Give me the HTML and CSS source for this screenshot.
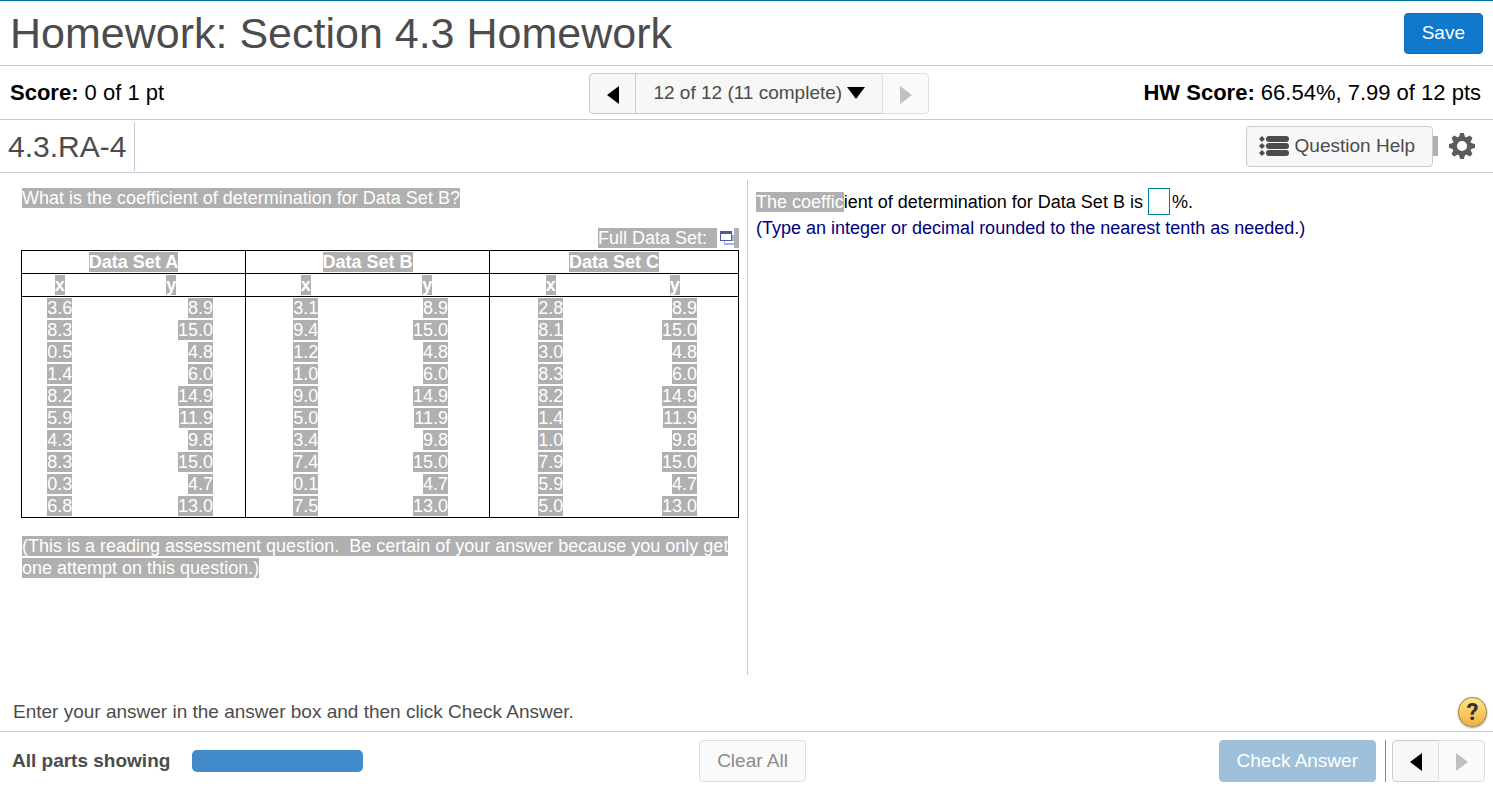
FILE: index.html
```html
<!DOCTYPE html>
<html lang="en">
<head>
    <meta charset="UTF-8">
    <meta name="viewport" content="width=device-width, initial-scale=1.0">
    <title>Homework: Section 4.3 Homework</title>
    <link rel="stylesheet" href="styles.css">
</head>
<body>
    <header class="title-bar">
        <h1>Homework: Section 4.3 Homework</h1>
        <button class="btn btn-save">Save</button>
    </header>

    <div class="score-bar">
        <div class="score"><strong>Score:</strong> 0 of 1 pt</div>
        <div class="btn-group">
            <button class="btn btn-arrow" aria-label="Previous question">
                <svg width="12" height="18" viewBox="0 0 12 18"><path d="M12 0v18L0 9z"></path></svg>
            </button>
            <button class="btn btn-jump">
                12 of 12 (11 complete)
                <svg width="18" height="12" viewBox="0 0 18 12"><path d="M0 0h18L9 12z"></path></svg>
            </button>
            <button class="btn btn-arrow" aria-label="Next question" disabled>
                <svg width="12" height="18" viewBox="0 0 12 18"><path d="M0 0v18l12-9z"></path></svg>
            </button>
        </div>
        <div class="score hw-score"><strong>HW Score:</strong> 66.54%, 7.99 of 12 pts</div>
    </div>

    <div class="question-bar">
        <h2>4.3.RA-4</h2>
        <div class="question-tools">
            <button class="btn btn-help">
                <svg width="30" height="20" viewBox="0 0 30 20">
                    <path d="M3 0l3 3-3 3-3-3z"></path>
                    <path d="M3 7l3 3-3 3-3-3z"></path>
                    <path d="M3 14l3 3-3 3-3-3z"></path>
                    <rect x="7" y="0" width="23" height="6" rx="3"></rect>
                    <rect x="7" y="7" width="23" height="6" rx="3"></rect>
                    <rect x="7" y="14" width="23" height="6" rx="3"></rect>
                </svg>
                Question Help
            </button>
            <span class="selected-gap"></span>
            <button class="btn-gear" aria-label="Settings">
                <svg width="26" height="26" viewBox="-13 -13 26 26">
                    <circle r="7.4" fill="none" stroke="#5c5c5c" stroke-width="4.6"></circle>
                    <g fill="#5c5c5c">
                        <path id="tooth" d="M-3.2-8.8L-1.8-13h3.6L3.2-8.8z"></path>
                        <use href="#tooth" transform="rotate(45)"></use>
                        <use href="#tooth" transform="rotate(90)"></use>
                        <use href="#tooth" transform="rotate(135)"></use>
                        <use href="#tooth" transform="rotate(180)"></use>
                        <use href="#tooth" transform="rotate(225)"></use>
                        <use href="#tooth" transform="rotate(270)"></use>
                        <use href="#tooth" transform="rotate(315)"></use>
                    </g>
                </svg>
            </button>
        </div>
    </div>

    <main class="panes">
        <section class="pane question">
            <p><mark>What is the coefficient of determination for Data Set B?</mark></p>
            <div class="full-data">
                <mark>Full Data Set:&nbsp;&nbsp;</mark>
                <a href="#" aria-label="Open full data set">
                    <svg width="14" height="14" viewBox="0 0 14 14">
                        <path d="M4 4h10v10H4z" fill="#aab0dc"></path>
                        <path d="M5 10h9v2H5z" fill="#fff"></path>
                        <path d="M0 0h12v10H0z" fill="#4a5aa8"></path>
                        <path d="M1 3h10v6H1z" fill="#fff"></path>
                    </svg>
                </a>
                <span class="selected-gap"></span>
            </div>
            <table class="data">
                <colgroup>
                    <col class="col-ax"><col class="col-ay">
                    <col class="col-bx"><col class="col-by">
                    <col class="col-cx"><col class="col-cy">
                </colgroup>
                <thead>
                    <tr>
                        <th colspan="2"><mark>Data Set A</mark></th>
                        <th colspan="2"><mark>Data Set B</mark></th>
                        <th colspan="2"><mark>Data Set C</mark></th>
                    </tr>
                    <tr>
                        <th><mark>x</mark></th><th><mark>y</mark></th>
                        <th><mark>x</mark></th><th><mark>y</mark></th>
                        <th><mark>x</mark></th><th><mark>y</mark></th>
                    </tr>
                </thead>
                <tbody>
                    <tr><td><mark>3.6</mark></td><td><mark>8.9</mark></td><td><mark>3.1</mark></td><td><mark>8.9</mark></td><td><mark>2.8</mark></td><td><mark>8.9</mark></td></tr>
                    <tr><td><mark>8.3</mark></td><td><mark>15.0</mark></td><td><mark>9.4</mark></td><td><mark>15.0</mark></td><td><mark>8.1</mark></td><td><mark>15.0</mark></td></tr>
                    <tr><td><mark>0.5</mark></td><td><mark>4.8</mark></td><td><mark>1.2</mark></td><td><mark>4.8</mark></td><td><mark>3.0</mark></td><td><mark>4.8</mark></td></tr>
                    <tr><td><mark>1.4</mark></td><td><mark>6.0</mark></td><td><mark>1.0</mark></td><td><mark>6.0</mark></td><td><mark>8.3</mark></td><td><mark>6.0</mark></td></tr>
                    <tr><td><mark>8.2</mark></td><td><mark>14.9</mark></td><td><mark>9.0</mark></td><td><mark>14.9</mark></td><td><mark>8.2</mark></td><td><mark>14.9</mark></td></tr>
                    <tr><td><mark>5.9</mark></td><td><mark>11.9</mark></td><td><mark>5.0</mark></td><td><mark>11.9</mark></td><td><mark>1.4</mark></td><td><mark>11.9</mark></td></tr>
                    <tr><td><mark>4.3</mark></td><td><mark>9.8</mark></td><td><mark>3.4</mark></td><td><mark>9.8</mark></td><td><mark>1.0</mark></td><td><mark>9.8</mark></td></tr>
                    <tr><td><mark>8.3</mark></td><td><mark>15.0</mark></td><td><mark>7.4</mark></td><td><mark>15.0</mark></td><td><mark>7.9</mark></td><td><mark>15.0</mark></td></tr>
                    <tr><td><mark>0.3</mark></td><td><mark>4.7</mark></td><td><mark>0.1</mark></td><td><mark>4.7</mark></td><td><mark>5.9</mark></td><td><mark>4.7</mark></td></tr>
                    <tr><td><mark>6.8</mark></td><td><mark>13.0</mark></td><td><mark>7.5</mark></td><td><mark>13.0</mark></td><td><mark>5.0</mark></td><td><mark>13.0</mark></td></tr>
                </tbody>
            </table>
            <p><mark>(This is a reading assessment question.&nbsp; Be certain of your answer because you only get one attempt on this question.)</mark></p>
        </section>
        <section class="pane answer">
            <div class="answer-line">
                <label for="answer-input"><mark>The coeffic</mark>ient of determination for Data Set B is</label>
                <input type="text" id="answer-input" autocomplete="off">
                <span>%.</span>
            </div>
            <p class="hint">(Type an integer or decimal rounded to the nearest tenth as needed.)</p>
        </section>
    </main>

    <div class="instructions">
        <span>Enter your answer in the answer box and then click Check Answer.</span>
        <button class="btn-question" aria-label="Help">?</button>
    </div>

    <footer class="footer">
        <div class="parts">
            <strong>All parts showing</strong>
            <div class="progress"></div>
        </div>
        <button class="btn btn-clear" disabled>Clear All</button>
        <div class="footer-right">
            <button class="btn btn-check" disabled>Check Answer</button>
            <div class="btn-group">
                <button class="btn btn-arrow" aria-label="Previous part">
                    <svg width="12" height="18" viewBox="0 0 12 18"><path d="M12 0v18L0 9z"></path></svg>
                </button>
                <button class="btn btn-arrow" aria-label="Next part" disabled>
                    <svg width="12" height="18" viewBox="0 0 12 18"><path d="M0 0v18l12-9z"></path></svg>
                </button>
            </div>
        </div>
    </footer>
</body>
</html>
```
FILE: styles.css
```css
* {
    box-sizing: border-box;
}
body {
    font-family: Arial, 'Liberation Sans', sans-serif;
    font-size: 18px;
    line-height: 22px;
    margin: 0;
    min-height: 100vh;
    display: flex;
    flex-direction: column;
    background: white;
    color: black;
    border-top: 1px solid #00789a;
}
h1, h2, p {
    margin: 0;
    font-weight: normal;
}
mark {
    background: #b0b0b0;
    color: white;
}
.btn {
    height: 41px;
    padding: 0 17px;
    font-family: inherit;
    font-size: 19px;
    color: #4c4c4c;
    background: #f7f7f7;
    border: 1px solid #ccc;
    border-radius: 4px;
    display: flex;
    align-items: center;
    justify-content: center;
    cursor: pointer;
}
.btn:disabled {
    color: #8c8c8c;
    background: #fafafa;
    border-color: #dedede;
    cursor: default;
}

/* title */
.title-bar {
    display: flex;
    justify-content: space-between;
    align-items: center;
    height: 65px;
    padding: 0 10px;
    border-bottom: 1px solid #c8c8d8;
}
.title-bar h1 {
    font-size: 43px;
    line-height: 60px;
    color: #4c4c4c;
}
.title-bar .btn-save {
    color: white;
    background: #1179cc;
    border-color: #0f6cb6;
}

/* score row */
.score-bar {
    display: grid;
    grid-template-columns: 21fr auto 20fr;
    align-items: center;
    height: 54px;
    padding: 1px 12px 0 10px;
    border-bottom: 1px solid #c8c8d8;
}
.score {
    font-size: 22px;
}
.hw-score {
    text-align: right;
}
.btn-group {
    display: flex;
}
.btn-group .btn + .btn {
    margin-left: -1px;
}
.btn-group .btn {
    border-radius: 0;
}
.btn-group .btn:first-child {
    border-radius: 4px 0 0 4px;
}
.btn-group .btn:last-child {
    border-radius: 0 4px 4px 0;
}
.btn-arrow {
    width: 47px;
    padding: 3px 0 0;
}
.btn-arrow:disabled {
    fill: #c0c0c4;
}
.btn-jump {
    gap: 5px;
}

/* question row */
.question-bar {
    display: flex;
    justify-content: space-between;
    align-items: center;
    height: 53px;
    padding: 0 18px 0 0;
    border-bottom: 1px solid #c8c8d8;
}
.question-bar h2 {
    font-size: 30px;
    line-height: 49px;
    padding: 0 8px;
    color: #4c4c4c;
    border-right: 1px solid #c8c8d8;
}
.question-tools {
    display: flex;
    align-items: center;
}
.btn-help {
    padding: 0 17px 0 12px;
    gap: 6px;
    fill: #4c4c4c;
}
.selected-gap {
    width: 5px;
    height: 20px;
    background: #b0b0b0;
}
.btn-gear {
    display: flex;
    margin-left: 11px;
    padding: 0;
    border: none;
    background: none;
    cursor: pointer;
}

/* panes */
.panes {
    flex: 1;
    display: grid;
    grid-template-columns: 1fr 1fr;
    padding-top: 7px;
}
.question {
    padding: 7px 8px 0 21px;
    border-right: 1px solid #c8c8d8;
}
.question p {
    padding-left: 1px;
}
.full-data {
    display: flex;
    justify-content: flex-end;
    align-items: center;
    gap: 3px;
    height: 22px;
    margin-top: 18px;
}
.full-data mark {
    line-height: 20px;
}
.full-data a {
    display: flex;
}
.full-data .selected-gap {
    margin-left: -3px;
}
.data {
    width: 100%;
    table-layout: fixed;
    border-collapse: collapse;
    border: 1px solid black;
    margin: 1px 0 17px;
}
.col-ax { width: 76px; }
.col-ay { width: 148px; }
.col-bx { width: 120px; }
.col-by { width: 124px; }
.col-cx { width: 122px; }
.col-cy { width: 127px; }
.data th, .data td {
    padding: 0;
    text-align: center;
}
.data th {
    border-bottom: 1px solid black;
}
.data th[colspan], .data tr > :nth-child(even) {
    border-right: 1px solid black;
}
.data td:nth-child(even) {
    text-align: right;
    padding-right: 41px;
}
.data td:nth-child(2) {
    padding-right: 32px;
}
.answer {
    padding: 8px 8px 0;
}
.answer-line {
    display: flex;
    align-items: center;
}
#answer-input {
    width: 22px;
    height: 27px;
    margin: 0 2px 0 5px;
    padding: 0 2px;
    font: inherit;
    border: 1px solid #007f9f;
}
.hint {
    margin-top: 2px;
    color: #000080;
}

/* bottom */
.instructions {
    display: flex;
    justify-content: space-between;
    align-items: center;
    height: 57px;
    padding: 18px 6px 0 13px;
    font-size: 19px;
    color: #4c4c4c;
    border-bottom: 1px solid #c8c8d8;
}
.btn-question {
    width: 29px;
    height: 30px;
    padding: 0;
    font-family: Roboto, Arial, sans-serif;
    font-size: 24px;
    line-height: 28px;
    font-weight: bold;
    color: #333;
    background: linear-gradient(#fde58f, #f2b23e);
    border: 1px solid #a88238;
    border-radius: 50%;
    box-shadow: 0 1px 2px #999;
    cursor: pointer;
}
.footer {
    display: grid;
    grid-template-columns: 1fr auto 1fr;
    align-items: center;
    height: 57px;
    padding: 0 8px 0 12px;
}
.footer .btn {
    height: 42px;
}
.btn-clear {
    margin-left: 8px;
}
.parts {
    display: flex;
    align-items: center;
    gap: 22px;
    font-size: 19px;
    color: #4c4c4c;
}
.progress {
    width: 171px;
    height: 22px;
    background: #428bca;
    border-radius: 5px;
}
.footer-right {
    display: flex;
    justify-content: flex-end;
}
.btn-check:disabled {
    color: white;
    background: #9ec0da;
    border-color: #9ec0da;
}
.footer-right .btn-group {
    margin-left: 9px;
    padding-left: 6px;
    border-left: 1px solid #888;
}
```
